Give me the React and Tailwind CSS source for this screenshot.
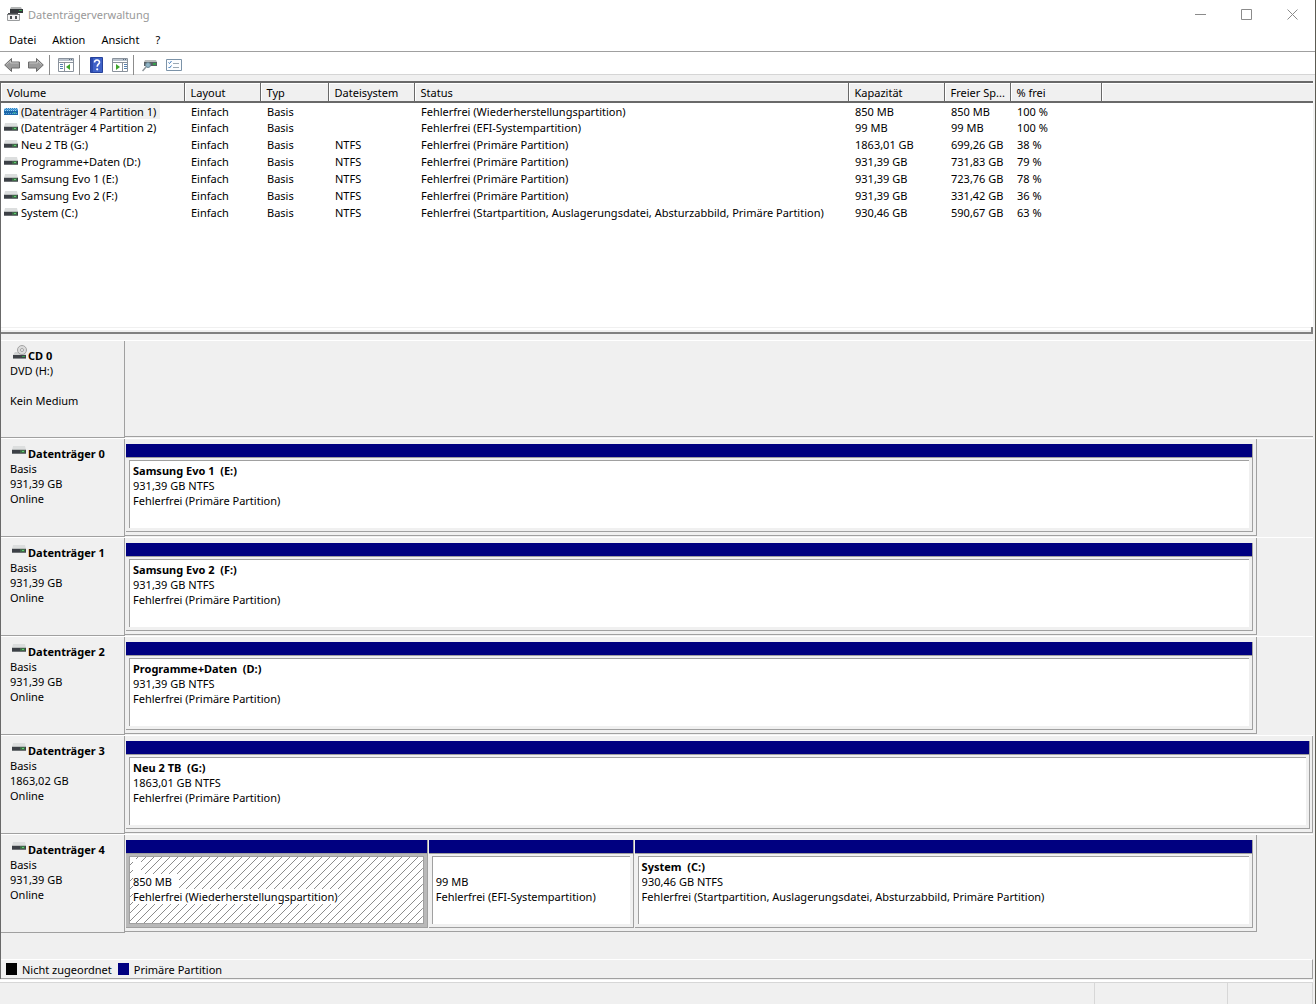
import React from "react";

const volumes = [
  ["(Datenträger 4 Partition 1)", "", "Fehlerfrei (Wiederherstellungspartition)", "850 MB", "850 MB", "100 %"],
  ["(Datenträger 4 Partition 2)", "", "Fehlerfrei (EFI-Systempartition)", "99 MB", "99 MB", "100 %"],
  ["Neu 2 TB (G:)", "NTFS", "Fehlerfrei (Primäre Partition)", "1863,01 GB", "699,26 GB", "38 %"],
  ["Programme+Daten (D:)", "NTFS", "Fehlerfrei (Primäre Partition)", "931,39 GB", "731,83 GB", "79 %"],
  ["Samsung Evo 1 (E:)", "NTFS", "Fehlerfrei (Primäre Partition)", "931,39 GB", "723,76 GB", "78 %"],
  ["Samsung Evo 2 (F:)", "NTFS", "Fehlerfrei (Primäre Partition)", "931,39 GB", "331,42 GB", "36 %"],
  [
    "System (C:)",
    "NTFS",
    "Fehlerfrei (Startpartition, Auslagerungsdatei, Absturzabbild, Primäre Partition)",
    "930,46 GB",
    "590,67 GB",
    "63 %",
  ],
];

const columns = [
  ["Volume", "w-[183px]"],
  ["Layout", "w-[76px]"],
  ["Typ", "w-[68px]"],
  ["Dateisystem", "w-[86px]"],
  ["Status", "w-[434px]"],
  ["Kapazität", "w-[96px]"],
  ["Freier Sp...", "w-[66px]"],
  ["% frei", "w-[91px]"],
];

const disks = [
  {
    name: "Datenträger 0",
    size: "931,39 GB",
    parts: [{ name: "Samsung Evo 1  (E:)", size: "931,39 GB NTFS", status: "Fehlerfrei (Primäre Partition)" }],
  },
  {
    name: "Datenträger 1",
    size: "931,39 GB",
    parts: [{ name: "Samsung Evo 2  (F:)", size: "931,39 GB NTFS", status: "Fehlerfrei (Primäre Partition)" }],
  },
  {
    name: "Datenträger 2",
    size: "931,39 GB",
    parts: [{ name: "Programme+Daten  (D:)", size: "931,39 GB NTFS", status: "Fehlerfrei (Primäre Partition)" }],
  },
  {
    name: "Datenträger 3",
    size: "1863,02 GB",
    full: true,
    parts: [{ name: "Neu 2 TB  (G:)", size: "1863,01 GB NTFS", status: "Fehlerfrei (Primäre Partition)" }],
  },
  {
    name: "Datenträger 4",
    size: "931,39 GB",
    parts: [
      { name: "", size: "850 MB", status: "Fehlerfrei (Wiederherstellungspartition)", selected: true },
      { name: "", size: "99 MB", status: "Fehlerfrei (EFI-Systempartition)" },
      {
        name: "System  (C:)",
        size: "930,46 GB NTFS",
        status: "Fehlerfrei (Startpartition, Auslagerungsdatei, Absturzabbild, Primäre Partition)",
      },
    ],
  },
];

function DriveIcon({ selected }) {
  if (selected) {
    return (
      <svg className="w-[14px] h-[9px] shrink-0" viewBox="0 0 14 9" aria-hidden="true">
        <path d="M1 1h12l1 2v5H0V3z" fill="#2f86c8" />
        <path d="M0 4h14v4H0z" fill="#1c66a8" />
        <path d="M9 5h3v2H9z" fill="#2f9a9a" />
        <path d="M1 1.500h12M1 3.500h12" stroke="#a5d2f0" strokeDasharray="1 1" />
        <path d="M0 2.500h14M0 6.500h14" stroke="#5aa6dc" strokeDasharray="1 1" />
      </svg>
    );
  }
  return (
    <svg className="w-[14px] h-[9px] shrink-0" viewBox="0 0 14 9" aria-hidden="true">
      <path d="M1 0h12l1 4H0z" fill="#dcdede" />
      <path d="M0 3h14v1H0z" fill="#b9bcbc" />
      <path d="M0 4h14v4H0z" fill="#3c4046" />
      <path d="M0 7h14v1H0z" fill="#6f7376" />
      <path d="M8 4h5v3H8z" fill="#3f6a48" />
      <path d="M10 5h2v1h-2z" fill="#5fd070" />
    </svg>
  );
}

function CdIcon() {
  return (
    <svg className="w-4 h-4 shrink-0" viewBox="0 0 16 16" aria-hidden="true">
      <path d="M3 8h10l1 3H1z" fill="#d0d2d2" />
      <path d="M1 11h13v3H1z" fill="#3f4348" />
      <path d="M1 14h13v1H1z" fill="#8b8e90" />
      <path d="M10 12h3v1h-3z" fill="#35a04a" />
      <circle cx="10" cy="6" r="4.500" fill="#dcdcdc" stroke="#a3a3a3" />
      <circle cx="10" cy="6" r="1.500" fill="#f4f4f4" stroke="#a3a3a3" />
    </svg>
  );
}

function AppIcon() {
  return (
    <svg className="w-4 h-4 shrink-0" viewBox="0 0 16 16" aria-hidden="true">
      <path d="M4 1h10l1 2H3z" fill="#b4b6b6" />
      <path d="M3 3h13v4H3z" fill="#35383b" />
      <path d="M12 4h3v1h-3z" fill="#35a04a" />
      <path d="M1 7h10v2H1z" fill="#4a4d50" />
      <path d="M.5 8.500h12v6H.5z" fill="#f4f4f4" stroke="#9a9c9e" />
      <path d="M0 8h13v1H0z" fill="#77797b" />
      <path d="M3 10h2v3H3zM8 10h2v3H8z" fill="#4d5053" />
    </svg>
  );
}

function ArrowIcon({ flip }) {
  return (
    <svg className={flip ? "w-4 h-4 -scale-x-100" : "w-4 h-4"} viewBox="0 0 16 16" aria-hidden="true">
      <path d="M.7 8 7.500 1.500V5h8v6h-8v3.500z" fill="#9b9b9b" stroke="#6b6b6b" strokeLinejoin="round" />
      <path d="M2.500 7.500 6.500 3.800V6h8" fill="none" stroke="#c4c4c4" />
    </svg>
  );
}

function PaneIcon({ right }) {
  return (
    <svg className="w-4 h-4" viewBox="0 0 16 16" aria-hidden="true">
      <path d="M.5 1.500h15v13H.5z" fill="#fff" stroke="#8a929c" />
      <path d="M1 2h14v2H1z" fill="#b9c2cc" />
      <path d="M11 2.500h1M13 2.500h1" stroke="#5a6c80" />
      <path d="M1 5.500h14" stroke="#8a929c" />
      {right ? (
        <>
          <path d="M10.500 6v8" stroke="#8a929c" />
          <path d="M12 7.500h3M12 9.500h3M12 11.500h3" stroke="#5580b0" />
          <path d="M4 7v6l4-3z" fill="#3fa52c" />
        </>
      ) : (
        <>
          <path d="M6.500 6v8" stroke="#8a929c" />
          <path d="M2 7.500h3M2 9.500h3M2 11.500h3" stroke="#5580b0" />
          <path d="M12 7v6l-4-3z" fill="#3fa52c" />
        </>
      )}
    </svg>
  );
}

function HelpIcon() {
  return (
    <svg className="w-4 h-4" viewBox="0 0 16 16" aria-hidden="true">
      <path d="M2.500.5h12v15h-12z" fill="#3f62c8" stroke="#27429b" />
      <path d="M3 1h2v14H3z" fill="#2c4bae" />
      <path d="M6.500 5.500c0-3.300 5-3.300 5-.3 0 2-2.300 2-2.300 4.500" fill="none" stroke="#fff" strokeWidth="1.600" />
      <circle cx="9.200" cy="12.300" r="1.100" fill="#fff" />
    </svg>
  );
}

function RescanIcon() {
  return (
    <svg className="w-4 h-4" viewBox="0 0 16 16" aria-hidden="true">
      <path d="M3 3h11l1 2H2z" fill="#b8bcbc" />
      <path d="M2 5h13v4H2z" fill="#596066" />
      <path d="M11 6h3v2h-3z" fill="#35a04a" />
      <circle cx="6" cy="8" r="2.500" fill="#8fb4c6" stroke="#6c8795" />
      <path d="m4 10-3.500 4" stroke="#8c9499" strokeWidth="1.500" />
    </svg>
  );
}

function ListIcon() {
  return (
    <svg className="w-4 h-4" viewBox="0 0 16 16" aria-hidden="true">
      <path d="M.5 2.500h15v11H.5z" fill="#fbfdff" stroke="#7c93a8" />
      <path d="m2.500 5.500 1 1 2-2.500M2.500 10l1 1 2-2.500" fill="none" stroke="#3c78b8" />
      <path d="M7 6.500h6M7 10.500h6" stroke="#9aa8b4" />
    </svg>
  );
}

function ToolButton({ label, children }) {
  return (
    <button type="button" aria-label={label} className="flex w-6 h-5 items-center justify-center">
      {children}
    </button>
  );
}

function Separator() {
  return <div className="w-px h-5 ml-px mr-1 bg-[#8c8c8c]"></div>;
}

function WindowButton({ label, d }) {
  return (
    <button type="button" aria-label={label} className="flex w-[46px] h-[26px] items-center justify-center">
      <svg className="w-[11px] h-[11px]" viewBox="0 0 11 11" fill="none" stroke="#8b8b8b">
        <path d={d} />
      </svg>
    </button>
  );
}

function Hatch() {
  return (
    <svg className="absolute inset-0 w-full h-full" aria-hidden="true">
      <defs>
        <pattern id="hatch" width="8" height="8" patternUnits="userSpaceOnUse">
          <path
            d="M0 7h1v1H0zM1 6h1v1H1zM2 5h1v1H2zM3 4h1v1H3zM4 3h1v1H4zM5 2h1v1H5zM6 1h1v1H6zM7 0h1v1H7z"
            fill="#8c8c8c"
            shapeRendering="crispEdges"
          />
        </pattern>
      </defs>
      <rect width="100%" height="100%" fill="url(#hatch)" />
    </svg>
  );
}

function Partition({ part }) {
  return (
    <div className="flex flex-col min-w-0 border-r border-b border-[#a0a0a0]">
      <div className="h-[14px] border-b border-[#a0a0a0] bg-[#000080]"></div>
      <div className={part.selected ? "flex-1 p-[3px] pt-0.5 bg-[#b9b9b9]" : "flex-1 p-[3px] pt-0.5"}>
        <div
          className={
            part.selected
              ? "relative h-full border border-[#a0a0a0] bg-white"
              : "h-full border-t border-l border-[#a0a0a0] bg-white"
          }
        >
          {part.selected ? <Hatch /> : null}
          <div className="relative pl-[3px] pt-0.5">
            <div className="h-[15px] font-bold whitespace-pre">
              {part.selected ? <span className="inline-block w-2 h-[15px] bg-white"></span> : part.name}
            </div>
            <div className="h-[15px] truncate">
              <span className={part.selected ? "inline-block bg-white pr-[7px]" : ""}>{part.size}</span>
            </div>
            <div className="h-[15px] truncate">
              <span className={part.selected ? "inline-block bg-white" : ""}>{part.status}</span>
            </div>
          </div>
        </div>
      </div>
    </div>
  );
}

function DiskLabel({ icon, name, lines }) {
  return (
    <div className="w-[124px] shrink-0 border-r border-b border-[#a0a0a0] pl-[9px] pt-[7px]">
      <div className="flex h-[15px] gap-0.5 font-bold">
        {icon}
        <span>{name}</span>
      </div>
      {lines.map((line, i) => (
        <div key={i} className="h-[15px]">
          {line}
        </div>
      ))}
    </div>
  );
}

function DiskRow({ disk }) {
  return (
    <div className="flex h-[99px] border-t border-white">
      <DiskLabel
        icon={
          <span className="w-4 pl-0.5">
            <DriveIcon />
          </span>
        }
        name={disk.name}
        lines={["Basis", disk.size, "Online"]}
      />
      <div className="flex-1 pb-px">
        <div
          className={
            disk.full
              ? "h-full border-r border-b border-[#a0a0a0] pl-px pt-[5px] pr-0.5 pb-[3px]"
              : "w-[95.3%] h-full border-r border-b border-[#a0a0a0] pl-px pt-[5px] pr-[3px] pb-[3px]"
          }
        >
          <div
            className={
              disk.parts.length > 1 ? "grid grid-cols-[302fr_205fr_619fr] gap-px h-full" : "grid grid-cols-1 h-full"
            }
          >
            {disk.parts.map((part, i) => (
              <Partition key={i} part={part} />
            ))}
          </div>
        </div>
      </div>
    </div>
  );
}

export default function App() {
  return (
    <div className="flex flex-col min-h-screen border-r border-[#5c5b52] bg-[#f0f0f0] text-black text-[11px] leading-[15px] font-['Noto_Sans','Open_Sans',sans-serif]">
      <header className="flex h-7 items-center bg-white pl-[7px]">
        <AppIcon />
        <h1 className="flex-1 pl-[5px] text-[#999]">Datenträgerverwaltung</h1>
        <WindowButton label="Minimieren" d="M0 5.500h11" />
        <WindowButton label="Maximieren" d="M.5.500h10v10H.5z" />
        <WindowButton label="Schließen" d="m.5.500 10 10m0-10-10 10" />
      </header>

      <nav className="flex h-6 items-center gap-4 border-b border-[#a0a0a0] bg-white pl-[9px]">
        <button type="button">Datei</button>
        <button type="button">Aktion</button>
        <button type="button">Ansicht</button>
        <button type="button">?</button>
      </nav>

      <div className="flex h-[23px] items-center border-b border-[#d5d5d5] bg-white pt-[3px]">
        <ToolButton label="Zurück">
          <ArrowIcon />
        </ToolButton>
        <ToolButton label="Vorwärts">
          <ArrowIcon flip />
        </ToolButton>
        <Separator />
        <ToolButton label="Konsolenstruktur ein-/ausblenden">
          <PaneIcon />
        </ToolButton>
        <Separator />
        <ToolButton label="Hilfe">
          <HelpIcon />
        </ToolButton>
        <ToolButton label="Aktionsbereich ein-/ausblenden">
          <PaneIcon right />
        </ToolButton>
        <Separator />
        <ToolButton label="Neu einlesen">
          <RescanIcon />
        </ToolButton>
        <ToolButton label="Eigenschaften">
          <ListIcon />
        </ToolButton>
      </div>

      <main className="mt-1.5 mr-0.5 border-t-2 border-l border-[#696969]">
        <section className="min-h-[244px] bg-white">
          <table className="w-full table-fixed text-left">
            <thead>
              <tr className="h-[19px] bg-[#f0f0f0]">
                {columns.map(([name, width]) => (
                  <th
                    key={name}
                    className={`${width} whitespace-nowrap border-r border-b-2 border-[#696969] pl-1.5 font-normal shadow-[inset_1px_1px_0_#fff]`}
                  >
                    {name}
                  </th>
                ))}
                <td className="border-b-2 border-[#696969] shadow-[inset_1px_1px_0_#fff]"></td>
              </tr>
            </thead>
            <tbody>
              {volumes.map(([name, fs, status, size, free, percent], i) => (
                <tr key={name} className="h-[17px] whitespace-nowrap">
                  <td className="pl-[3px]">
                    <div className="flex items-center">
                      <DriveIcon selected={i === 0} />
                      <span className={i === 0 ? "ml-px px-0.5 pr-1 bg-[#f0f0f0]" : "ml-px px-0.5"}>{name}</span>
                    </div>
                  </td>
                  <td className="pl-[7px]">Einfach</td>
                  <td className="pl-[7px]">Basis</td>
                  <td className="pl-[7px]">{fs}</td>
                  <td className="pl-[7px]">{status}</td>
                  <td className="pl-[7px]">{size}</td>
                  <td className="pl-[7px]">{free}</td>
                  <td className="pl-[7px]">{percent}</td>
                  <td></td>
                </tr>
              ))}
            </tbody>
          </table>
        </section>

        <div className="h-[7px] border-b-2 border-r-2 border-[#808080] shadow-[inset_0_1px_0_#f0f0f0,inset_0_3px_0_#fff]"></div>

        <section className="pt-1.5">
          <div className="flex h-[98px] border-t border-white">
            <DiskLabel
              icon={
                <span className="w-4 -mt-1 pl-0.5">
                  <CdIcon />
                </span>
              }
              name="CD 0"
              lines={["DVD (H:)", "", "Kein Medium"]}
            />
            <div className="flex-1 pb-px">
              <div className="h-full border-b border-[#a0a0a0]"></div>
            </div>
          </div>
          {disks.map((disk) => (
            <DiskRow key={disk.name} disk={disk} />
          ))}
        </section>

        <footer className="flex mt-[26px] h-5 items-center border-t border-r border-b border-t-white border-r-[#a0a0a0] border-b-[#a0a0a0] pl-[5px]">
          <span className="w-[11px] h-3 mr-[5px] bg-black"></span>
          <span>Nicht zugeordnet</span>
          <span className="w-[11px] h-3 ml-1.5 mr-[5px] bg-[#000080]"></span>
          <span>Primäre Partition</span>
        </footer>
      </main>

      <div className="flex flex-1 mt-px mr-0.5 min-h-[23px] border-t-2 border-white">
        <div className="flex-1 border-t border-r border-[#d7d7d7]"></div>
        <div className="w-[133px] border-t border-r border-[#d7d7d7]"></div>
        <div className="w-[85px] border-t border-r border-[#d7d7d7]"></div>
      </div>
    </div>
  );
}
